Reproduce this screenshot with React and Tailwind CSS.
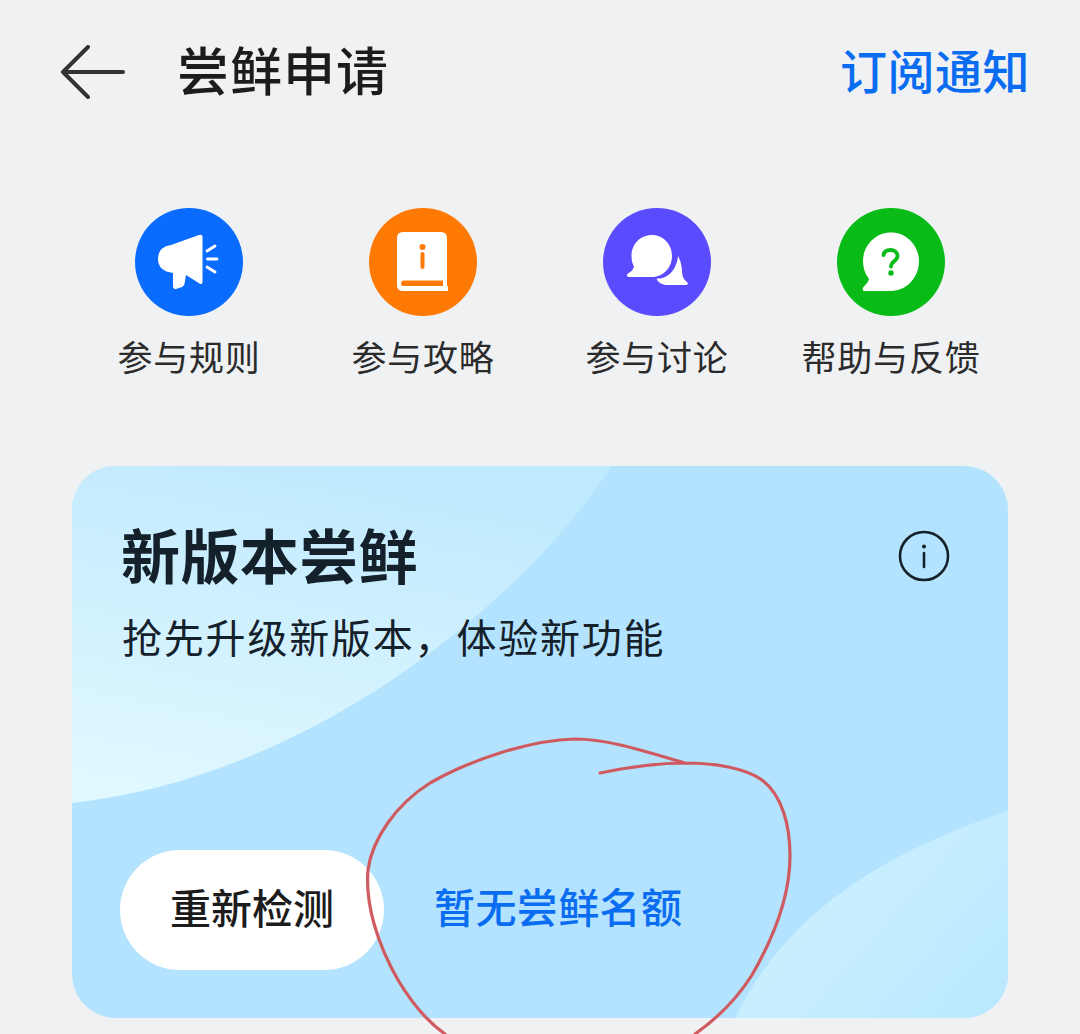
const CJK = "font-['Noto_Sans_CJK_SC','Noto_Sans',sans-serif]"

function Megaphone() {
  return (
    <svg viewBox="0 0 108 108" className="w-[108px] h-[108px]">
      <circle cx="54" cy="54" r="54" fill="#0a6cff" />
      <path d="M36 37 L64 27 Q67.5 26 67.5 29 L67.5 74 Q67.5 77 64.5 75.5 L51 67 L49.5 76 Q49 78 47 79 L41 81 Q38 81.5 38 78 L38 65 Q23 63 23 51 Q23 39 36 37 Z" fill="#fff" />
      <path d="M72 43 L80 38 M72.5 51 L82 51 M72 59 L80 64" stroke="#fff" strokeWidth="2.8" strokeLinecap="round" fill="none" />
    </svg>
  )
}

function Book() {
  return (
    <svg viewBox="0 0 108 108" className="w-[108px] h-[108px]">
      <circle cx="54" cy="54" r="54" fill="#ff7a05" />
      <path d="M34 24 L72 24 Q78 24 78 30 L78 78 L79 78 L79 83 L34 83 Q28 83 28 77 L28 30 Q28 24 34 24 Z" fill="#fff" />
      <path d="M35 72.5 L74 72.5 L74 78 L35 78 Q32 78 32 75.2 Q32 72.5 35 72.5 Z" fill="#ff7a05" />
      <circle cx="53.5" cy="39" r="3" fill="#ff7a05" />
      <path d="M53.5 46 L53.5 59" stroke="#ff7a05" strokeWidth="4" strokeLinecap="round" />
    </svg>
  )
}

function Chat() {
  return (
    <svg viewBox="0 0 108 108" className="w-[108px] h-[108px]">
      <circle cx="54" cy="54" r="54" fill="#5b4bff" />
      <path d="M49 27 C61 27 69 37 69 48 C69 60 60 69 49 69 L26 69 C23.5 69 23.5 66.5 25 65.5 C28 63.5 30.5 61.5 31 58.5 C29 55 28.5 51.5 28.5 48 C28.5 36.5 37 27 49 27 Z" fill="#fff" />
      <path d="M75 48 C78 53 79 60 79 64 C79.5 69 81 72 84 74 C85.5 75 85 77 83 77 L65 77 C60 77 56 75 54 72 C53.5 71 54 70.5 55 70.5 C65 71 74 61 75 48 Z" fill="#fff" />
    </svg>
  )
}

function Help() {
  return (
    <svg viewBox="0 0 108 108" className="w-[108px] h-[108px]">
      <circle cx="54" cy="54" r="54" fill="#08bb17" />
      <path d="M54 24.5 C70 24.5 82 38 82 53 C82 69 70 83 54 83 L28 83 C25.5 83 25 80.5 26.5 79 C29.5 76 31.5 73.5 32 71 C28 66 26 60 26 53 C26 38 38 24.5 54 24.5 Z" fill="#fff" />
      <path d="M46.5 47 C47 43.5 50 42 53.5 42 C57.5 42 60.5 44.5 60.5 48 C60.5 53 54 53 54 58.5" stroke="#08bb17" strokeWidth="3.8" strokeLinecap="round" fill="none" />
      <circle cx="54" cy="65" r="2.7" fill="#08bb17" />
    </svg>
  )
}

const ENTRIES = [
  { icon: <Megaphone />, label: '参与规则' },
  { icon: <Book />, label: '参与攻略' },
  { icon: <Chat />, label: '参与讨论' },
  { icon: <Help />, label: '帮助与反馈' },
]

export default function App() {
  return (
    <div className={`relative w-[1080px] h-[1034px] overflow-hidden bg-[#eff1f3] ${CJK}`}>
      <header className="h-[144px] pl-[60px] pr-[50px] flex items-center">
        <svg viewBox="0 0 68 54" className="w-[68px] h-[54px]">
          <path d="M3 27 L63 27 M28 2 L3 27 L28 52" stroke="#333" strokeWidth="4" strokeLinecap="round" strokeLinejoin="round" fill="none" />
        </svg>
        <h1 className="ml-[49px] mb-[6px] text-[52px] leading-[60px] tracking-[1px] font-medium text-[#1c1c1c]">尝鲜申请</h1>
        <span className="ml-auto mb-[6px] text-[47px] leading-[60px] tracking-[0.5px] font-medium text-[#0a6cf0]">订阅通知</span>
      </header>

      <div className="mt-[64px] px-[72px] grid grid-cols-4">
        {ENTRIES.map((entry) => (
          <div key={entry.label} className="flex flex-col items-center">
            {entry.icon}
            <span className="mt-[19px] text-[35px] leading-[42px] tracking-[0.8px] text-[#2b2b2b] whitespace-nowrap">{entry.label}</span>
          </div>
        ))}
      </div>

      <section className="relative mt-[89px] ml-[72px] w-[936px] h-[552px] rounded-[44px] overflow-hidden bg-[#b3e3fe] flex flex-col px-[48px] pt-[58px] pb-[48px]">
        <svg viewBox="0 0 936 552" className="absolute inset-0 w-[936px] h-[552px]">
          <defs>
            <linearGradient id="cardGlow" x1="0.6" y1="0" x2="0.3" y2="1">
              <stop offset="0" stopColor="#bfe9fe" />
              <stop offset="1" stopColor="#e0f8ff" />
            </linearGradient>
            <linearGradient id="cornerGlow" x1="0.1" y1="0.3" x2="1" y2="0.9">
              <stop offset="0" stopColor="#cef1ff" />
              <stop offset="1" stopColor="#bae8fe" />
            </linearGradient>
          </defs>
          <path d="M0 0 L540 0 C455 130 245 310 0 337 Z" fill="url(#cardGlow)" />
          <path d="M663 552 C715 445 815 385 936 345 L936 552 Z" fill="url(#cornerGlow)" />
        </svg>

        <div className="relative flex items-center justify-between">
          <h2 className="text-[59px] leading-[60px] tracking-[0.4px] font-bold text-[#14202a] ml-[1px]">新版本尝鲜</h2>
          <svg viewBox="0 0 52 52" className="w-[52px] h-[52px] mr-[10px] mt-[4px]">
            <circle cx="26" cy="26" r="24" stroke="#14202a" strokeWidth="2.6" fill="none" />
            <circle cx="26" cy="16.5" r="2" fill="#14202a" />
            <path d="M26 23 L26 37" stroke="#14202a" strokeWidth="2.6" strokeLinecap="round" />
          </svg>
        </div>
        <p className="relative mt-[27px] ml-[2px] text-[40px] leading-[50px] tracking-[1.8px] text-[#14202a] whitespace-nowrap">抢先升级新版本，体验新功能</p>

        <div className="relative mt-auto flex items-center">
          <button className="w-[264px] h-[120px] pb-[7px] rounded-[60px] bg-white text-[41px] font-medium text-[#1c1c1c]">重新检测</button>
          <span className="ml-[50px] mb-[8px] text-[41px] tracking-[0.4px] font-medium text-[#0a6cf0] whitespace-nowrap">暂无尝鲜名额</span>
        </div>
      </section>

      {/* hand-drawn red mark on top of the screenshot */}
      <svg viewBox="0 0 1080 1034" className="absolute inset-0 w-[1080px] h-[1034px] pointer-events-none">
        <path
          d="M600 773 C630 767 660 763 685 763 C715 763 745 768 762 780 C782 795 790 825 790 856 C790 890 778 930 752 975 C735 1002 715 1020 695 1034 M685 763 C650 753 610 739 575 739 C530 740 470 760 430 783 C395 805 372 840 368 870 C365 905 378 945 398 980 C410 1000 425 1020 445 1034"
          stroke="#cf5a60"
          strokeWidth="3.2"
          strokeLinecap="round"
          fill="none"
        />
      </svg>
    </div>
  )
}
